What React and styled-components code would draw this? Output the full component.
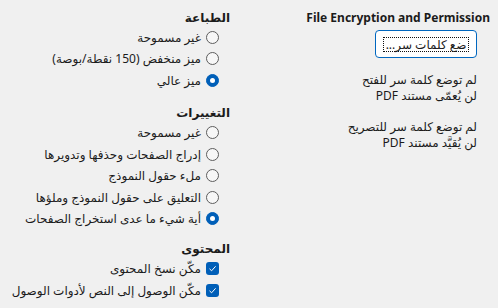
import React from 'react';
import styled, { createGlobalStyle } from 'styled-components';

const Global = createGlobalStyle`
	html, body {
		margin: 0;
		padding: 0;
		background: #f0f0f0;
	}
	body {
		width: 498px;
		height: 308px;
		overflow: hidden;
		font-family: 'Noto Sans', 'DejaVu Sans', sans-serif;
		font-size: 12px;
		color: #1b1b1b;
	}
`;

const Page = styled.div`
	direction: rtl;
	display: grid;
	grid-template-columns: 260px 1fr;
	padding: 8.5px 8px 0 0;
`;

const Column = styled.div`
	display: flex;
	flex-direction: column;
`;

const Heading = styled.div`
	font-weight: bold;
	height: 18px;
	line-height: 18px;
	white-space: nowrap;
	text-align: right;
`;

const Group = styled.div`
	display: flex;
	flex-direction: column;
	margin-bottom: ${(p) => p.$gap || 0}px;
`;

const Options = styled.div`
	display: flex;
	flex-direction: column;
	padding-right: 11px;
`;

const Row = styled.label`
	display: flex;
	align-items: center;
	gap: 5px;
	height: 21.5px;
	white-space: nowrap;
`;

const Radio = styled.span`
	flex: none;
	box-sizing: border-box;
	width: 13px;
	height: 13px;
	border-radius: 50%;
	border: 1px solid ${(p) => (p.$on ? '#005fb8' : '#5d5d5d')};
	background: ${(p) => (p.$on ? '#005fb8' : '#f7f7f7')};
	display: flex;
	align-items: center;
	justify-content: center;

	&::after {
		content: '';
		display: ${(p) => (p.$on ? 'block' : 'none')};
		width: 5px;
		height: 5px;
		border-radius: 50%;
		background: #fff;
	}
`;

const Check = styled.span`
	flex: none;
	width: 13px;
	height: 13px;
	border-radius: 3px;
	background: #005fb8;
	display: flex;
	align-items: center;
	justify-content: center;
`;

const Body = styled.div`
	display: flex;
	flex-direction: column;
	align-items: flex-start;
	padding-right: 13px;
`;

const Button = styled.button`
	direction: rtl;
	margin-top: 3.5px;
	width: 102px;
	height: 28px;
	box-sizing: border-box;
	background: #fff;
	border: 1px solid #0067c0;
	border-radius: 4px;
	padding: 0;
	font: inherit;
	color: inherit;
	display: flex;
	align-items: center;
	justify-content: center;

	& span {
		display: block;
		box-sizing: border-box;
		white-space: nowrap;
		min-width: 82px;
		padding: 0 2px;
		height: 15px;
		line-height: 13px;
		border: 1px dotted #111;
	}
`;

const Note = styled.div`
	margin-top: ${(p) => p.$top}px;
	line-height: 16.5px;
	white-space: nowrap;
`;

const RadioRow = ({ on, children }) => (
	<Row>
		<Radio $on={on} />
		{children}
	</Row>
);

const CheckRow = ({ children }) => (
	<Row>
		<Check>
			<svg width="9" height="9" viewBox="0 0 9 9">
				<path d="M1.5 4.8 L3.6 6.8 L7.6 2.3" fill="none" stroke="#fff" strokeWidth="1" />
			</svg>
		</Check>
		{children}
	</Row>
);

export default function App() {
	return (
		<>
			<Global />
			<Page>
				<Column>
					<Heading dir="ltr">File Encryption and Permission</Heading>
					<Body>
						<Button>
							<span>ضع كلمات سر...</span>
						</Button>
						<Note $top={13.5}>
							لم توضع كلمة سر للفتح
							<br />
							لن يُعمّى مستند PDF
						</Note>
						<Note $top={14}>
							لم توضع كلمة سر للتصريح
							<br />
							لن يُقيَّد مستند PDF
						</Note>
					</Body>
				</Column>
				<Column>
					<Group $gap={13}>
						<Heading>الطباعة</Heading>
						<Options>
							<RadioRow>غير مسموحة</RadioRow>
							<RadioRow>ميز منخفض (150 نقطة/بوصة)</RadioRow>
							<RadioRow on>ميز عالي</RadioRow>
						</Options>
					</Group>
					<Group $gap={10.5}>
						<Heading>التغييرات</Heading>
						<Options>
							<RadioRow>غير مسموحة</RadioRow>
							<RadioRow>إدراج الصفحات وحذفها وتدويرها</RadioRow>
							<RadioRow>ملء حقول النموذج</RadioRow>
							<RadioRow>التعليق على حقول النموذج وملؤها</RadioRow>
							<RadioRow on>أية شيء ما عدى استخراج الصفحات</RadioRow>
						</Options>
					</Group>
					<Group>
						<Heading>المحتوى</Heading>
						<Options>
							<CheckRow>مكّن نسخ المحتوى</CheckRow>
							<CheckRow>مكّن الوصول إلى النص لأدوات الوصول</CheckRow>
						</Options>
					</Group>
				</Column>
			</Page>
		</>
	);
}
